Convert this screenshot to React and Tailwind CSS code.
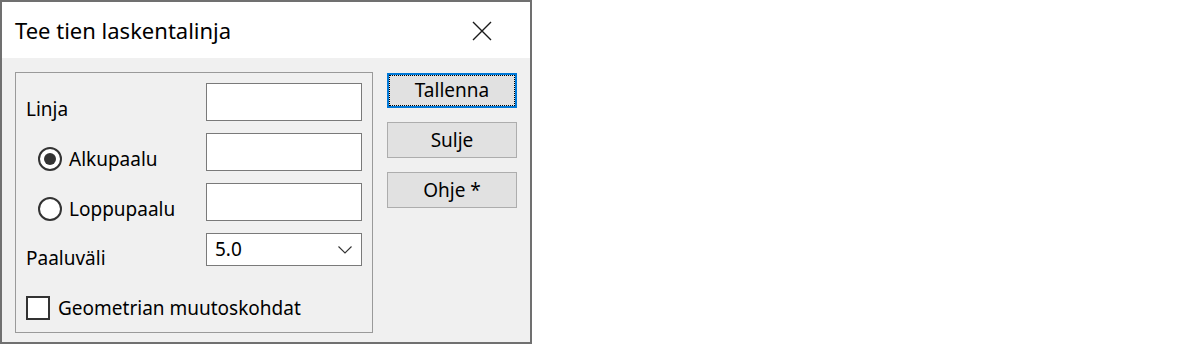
import { useState } from 'react';

const font = { fontFamily: '"Noto Sans", "Open Sans", sans-serif' };

function Radio({ checked, label, onSelect }) {
   return (
      <button type="button" onClick={onSelect} className="ml-[12px] flex items-center gap-[7px] text-left">
         <span className="flex h-[24px] w-[24px] items-center justify-center rounded-full border-2 border-[#333333] bg-white">
            {checked && <span className="h-[12px] w-[12px] rounded-full bg-[#333333]" />}
         </span>
         <span className="text-[19px] leading-[24px] text-black">{label}</span>
      </button>
   );
}

function Field() {
   return <input className="h-[38px] w-[156px] border border-[#7a7a7a] bg-white px-2 text-[19px] outline-none" />;
}

function Btn({ children, focused }) {
   if (focused) {
      return (
         <button type="button" className="h-[35px] w-[130px] border-2 border-[#0078d7] bg-[#e1e1e1] p-0">
            <span className="flex h-full w-full items-center justify-center border border-dotted border-black text-[19px] text-black">
               {children}
            </span>
         </button>
      );
   }
   return (
      <button type="button" className="flex h-[36px] w-[130px] items-center justify-center border border-[#adadad] bg-[#e1e1e1] text-[19px] text-black">
         {children}
      </button>
   );
}

export default function App() {
   const [start, setStart] = useState(true);
   const [geom, setGeom] = useState(false);

   return (
      <div className="h-[344px] w-[1200px] bg-white" style={font}>
         <div className="flex h-[344px] w-[532px] flex-col border-2 border-[#707070] bg-[#f0f0f0]">
            {/* title bar */}
            <div className="flex h-[56px] items-center justify-between bg-white pl-[13px] pr-[38px]">
               <span className="text-[22px] text-black">Tee tien laskentalinja</span>
               <svg width="20" height="20" viewBox="0 0 20 20" className="mt-[1px]">
                  <path d="M1 1 L19 19 M19 1 L1 19" stroke="#1a1a1a" strokeWidth="1.4" fill="none" />
               </svg>
            </div>

            <div className="flex pl-[13px] pt-[14px]">
               {/* group box */}
               <div className="flex h-[261px] w-[358px] flex-col border border-[#9a9a9a] pl-[10px] pr-[10px] pt-[10px]">
                  <div className="flex h-[38px] items-end justify-between">
                     <span className="text-[19px] leading-[24px] text-black">Linja</span>
                     <Field />
                  </div>
                  <div className="mt-[12px] flex h-[38px] items-end justify-between">
                     <Radio label="Alkupaalu" checked={start} onSelect={() => setStart(true)} />
                     <Field />
                  </div>
                  <div className="mt-[12px] flex h-[38px] items-end justify-between">
                     <Radio label="Loppupaalu" checked={!start} onSelect={() => setStart(false)} />
                     <Field />
                  </div>
                  <div className="mt-[12px] flex h-[33px] items-end justify-between">
                     <span className="text-[19px] leading-[16px] text-black">Paaluväli</span>
                     <div className="flex h-[33px] w-[156px] items-center justify-between border border-[#7a7a7a] bg-white pl-[8px] pr-[9px]">
                        <span className="text-[19px] text-black">5.0</span>
                        <svg width="14" height="8" viewBox="0 0 14 8">
                           <path d="M0.5 0.5 L7 7 L13.5 0.5" stroke="#333333" strokeWidth="1.1" fill="none" />
                        </svg>
                     </div>
                  </div>
                  <button type="button" onClick={() => setGeom(!geom)} className="mt-[30px] flex items-center gap-[8px] text-left">
                     <span className="flex h-[24px] w-[24px] items-center justify-center border-2 border-[#333333] bg-white text-[16px] leading-none">
                        {geom ? '✓' : ''}
                     </span>
                     <span className="text-[19px] leading-[24px] text-black">Geometrian muutoskohdat</span>
                  </button>
               </div>

               {/* buttons */}
               <div className="ml-[14px] flex flex-col gap-[14px] pt-px">
                  <Btn focused>Tallenna</Btn>
                  <Btn>Sulje</Btn>
                  <Btn>Ohje *</Btn>
               </div>
            </div>
         </div>
      </div>
   );
}
